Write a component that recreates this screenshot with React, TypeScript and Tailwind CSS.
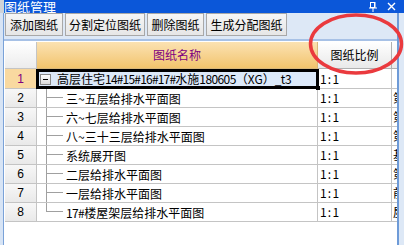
import React from "react";

const children = [
  { n: 2, name: "三~五层给排水平面图", extra: "第" },
  { n: 3, name: "六~七层给排水平面图", extra: "第" },
  { n: 4, name: "八~三十三层给排水平面图", extra: "第" },
  { n: 5, name: "系统展开图", extra: "基" },
  { n: 6, name: "二层给排水平面图", extra: "第" },
  { n: 7, name: "一层给排水平面图", extra: "前" },
  { n: 8, name: "17#楼屋架层给排水平面图", extra: "屋" },
];

function Btn({ w, label }: { w: string; label: string }) {
  return (
    <div
      className={`${w} h-[23px] flex items-center justify-center border border-[#a8a8a8] bg-gradient-to-b from-[#f6f6f6] to-[#e6e6e6] text-[12px] leading-none text-black`}
    >
      {label}
    </div>
  );
}

function RowHead({ n, sel }: { n: number; sel?: boolean }) {
  return (
    <div
      className={`w-[32px] shrink-0 flex items-center justify-center border-r border-b border-[#c4c4c4] font-['Liberation_Sans',sans-serif] text-[12px] leading-none ${
        sel
          ? "bg-[#f9d9a0] text-[#800080]"
          : "bg-gradient-to-b from-[#f7f7f7] to-[#e9e9e9] text-black"
      }`}
    >
      {n}
    </div>
  );
}

function Scale() {
  return (
    <div className="w-[74px] shrink-0 flex items-center pl-[2px] border-r border-b border-[#c4c4c4] tracking-[1.2px]">
      1:1
    </div>
  );
}

export default function App() {
  return (
    <div className="relative w-[404px] h-[245px] overflow-hidden bg-[#dde8f6] flex flex-col font-['Noto_Sans_CJK_SC',sans-serif]">
      {/* title bar */}
      <div className="flex h-[13px] shrink-0">
        <div className="w-[4px] bg-[#cfd3d8]" />
        <div className="flex-1 flex items-center bg-[#0b57d9] text-white text-[13px] leading-none">
          <span className="-mt-[1px]">图纸管理</span>
          <div className="ml-auto flex items-center gap-[10px] pr-[8px]">
            <svg width="8" height="10" viewBox="0 0 8 10" fill="none">
              <rect x="1.5" y="0.5" width="4" height="5" stroke="white" />
              <rect x="5" y="0" width="1.5" height="6" fill="white" />
              <rect x="0" y="5.5" width="8" height="1" fill="white" />
              <rect x="3.5" y="6" width="1" height="4" fill="white" />
            </svg>
            <svg width="9" height="9" viewBox="0 0 9 9">
              <path d="M1 1 L8 8 M8 1 L1 8" stroke="white" strokeWidth="1.4" />
            </svg>
          </div>
        </div>
      </div>

      {/* body */}
      <div className="flex flex-1 min-h-0">
        <div className="w-[3px] bg-[#d7e4f5]" />
        <div className="w-[1px] bg-[#7aa2d8]" />
        <div className="flex-1 flex flex-col min-w-0 min-h-0">
          {/* toolbar */}
          <div className="flex gap-[2px] pl-[1px] h-[26px] shrink-0">
            <Btn w="w-[58px]" label="添加图纸" />
            <Btn w="w-[80px]" label="分割定位图纸" />
            <Btn w="w-[57px]" label="删除图纸" />
            <Btn w="w-[81px]" label="生成分配图纸" />
          </div>
          <div className="h-[2px] bg-[#a7c1e6] shrink-0" />
          <div className="h-[1px] bg-white shrink-0" />

          {/* grid */}
          <div className="flex-1 bg-white pl-[1px] flex flex-col min-h-0 overflow-hidden text-[12px] leading-none text-black">
            {/* header */}
            <div className="flex h-[27px] shrink-0">
              <div className="w-[32px] shrink-0 border-r border-b border-[#c4c4c4] bg-gradient-to-b from-white to-[#ececec]" />
              <div className="w-[281px] shrink-0 flex items-center justify-center border-r border-b border-[#d9b87a] bg-gradient-to-b from-[#fbe2b2] to-[#f2c46c] text-[#800080] text-[12px]">
                图纸名称
              </div>
              <div className="w-[74px] shrink-0 flex items-center justify-center border-r border-b border-[#b0b0b0] bg-gradient-to-b from-white to-[#e9e9e9] text-[12px]">
                图纸比例
              </div>
              <div className="flex-1 border-b border-[#b0b0b0] bg-gradient-to-b from-white to-[#e9e9e9]" />
            </div>

            {/* row 1 */}
            <div className="flex h-[20px] shrink-0">
              <RowHead n={1} sel />
              <div className="relative w-[281px] shrink-0 flex items-center pl-[3px] bg-[#dce9f9] border-r border-b border-[#c4c4c4] whitespace-nowrap">
                <div className="w-[11px] h-[11px] mt-[2px] border border-[#8a8a8a] bg-gradient-to-b from-white to-[#dcdcdc] flex items-center justify-center">
                  <div className="w-[5px] h-[1px] bg-black" />
                </div>
                <span className="ml-[6px] mt-[1px]">
                  高层住宅<span className="tracking-[-0.8px]">14#15#16#17#</span>水施<span className="tracking-[-0.6px]">180605</span>（XG）<span className="tracking-[-0.5px]">_t3</span>
                </span>
                <div className="absolute -left-[1px] top-0 -right-[2px] -bottom-[1px] border-[3px] border-black pointer-events-none" />
                <div className="absolute -right-[3px] -bottom-[2px] w-[4px] h-[4px] bg-black" />
              </div>
              <Scale />
              <div className="flex-1 border-b border-[#c4c4c4]" />
            </div>

            {children.map((r, i) => {
              const last = i === children.length - 1;
              return (
                <div key={r.n} className="flex h-[19px] shrink-0">
                  <RowHead n={r.n} />
                  <div className="w-[281px] shrink-0 flex border-r border-b border-[#c4c4c4] whitespace-nowrap overflow-hidden">
                    <div className="w-[9px] shrink-0" />
                    <div className="w-[17px] shrink-0 flex flex-col">
                      <div className="h-[9px] border-l border-b border-[#a0a0a0]" />
                      <div className={`flex-1 ${last ? "" : "border-l border-[#a0a0a0]"}`} />
                    </div>
                    <div className="flex items-center pl-[3px] mt-[1px]">
                      {r.name.startsWith("17#") ? (
                        <>
                          <span className="tracking-[-0.6px]">17#</span>
                          {r.name.slice(3)}
                        </>
                      ) : (
                        r.name
                      )}
                    </div>
                  </div>
                  <Scale />
                  <div className="flex-1 flex items-center pl-[1px] border-b border-[#c4c4c4] overflow-hidden whitespace-nowrap">
                    {r.extra}
                  </div>
                </div>
              );
            })}
          </div>
        </div>
        <div className="w-[2px] bg-[#6e9bd8]" />
        <div className="w-[5px] bg-[#dde8f6]" />
      </div>

      {/* red annotation ellipse */}
      <svg
        className="absolute left-0 top-0 pointer-events-none"
        width="404"
        height="245"
        viewBox="0 0 404 245"
      >
        <ellipse
          cx="356"
          cy="44"
          rx="45.5"
          ry="29"
          fill="none"
          stroke="#ea3a3e"
          strokeWidth="3.5"
        />
      </svg>
    </div>
  );
}
